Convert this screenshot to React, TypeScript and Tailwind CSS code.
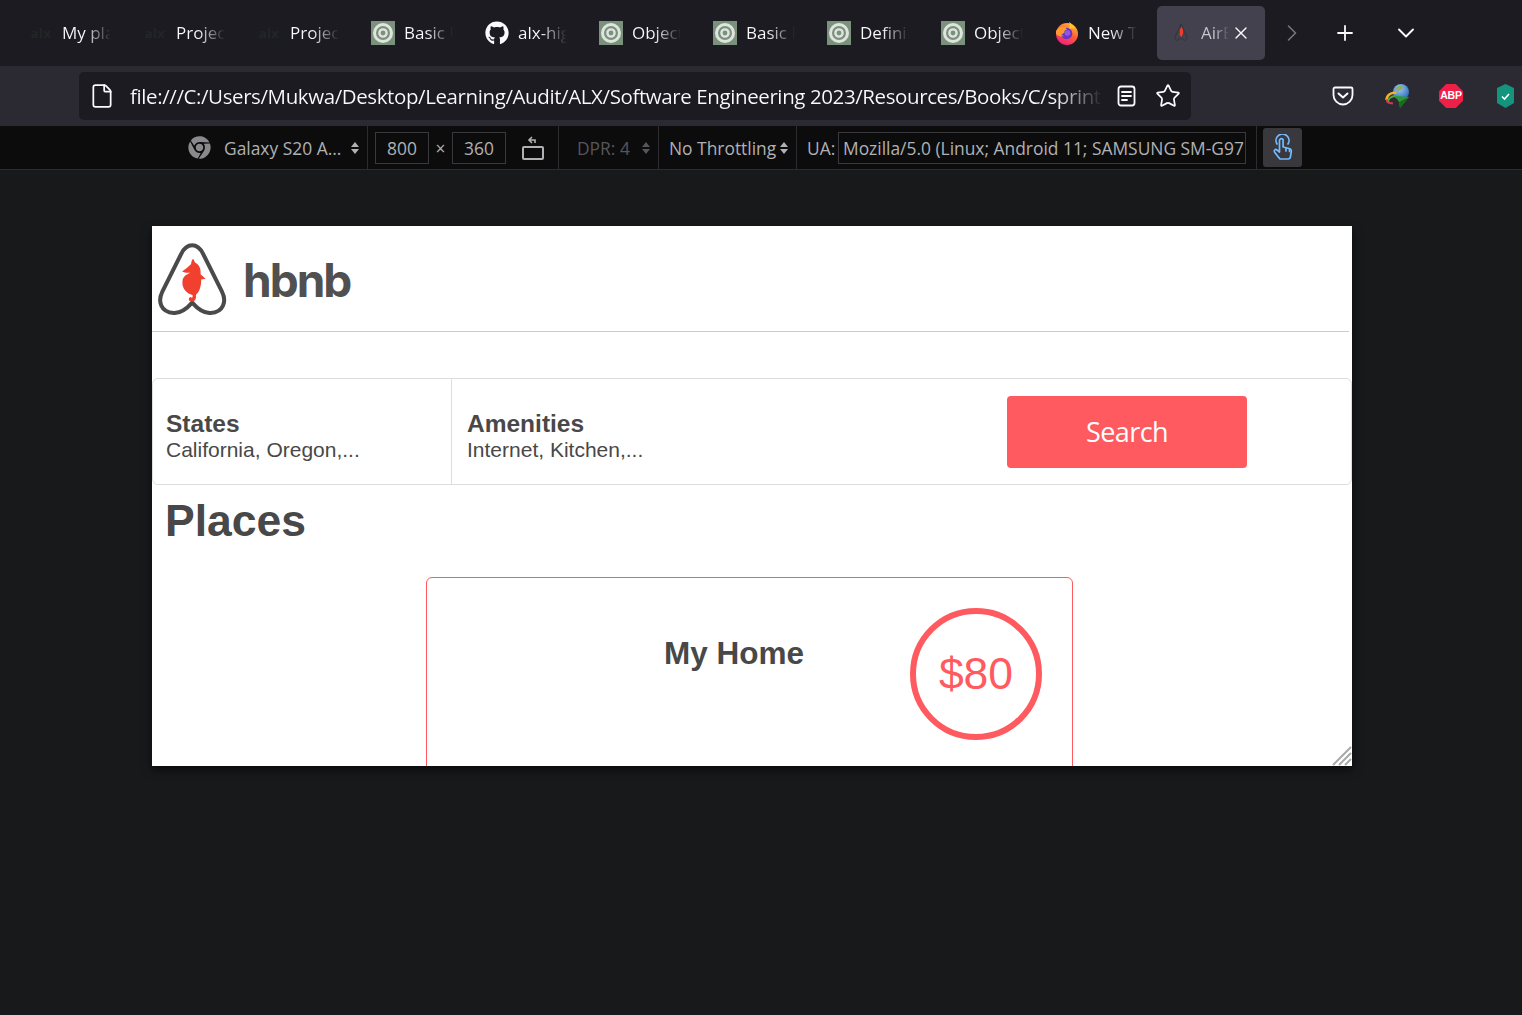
import React from 'react';
import { ChevronDown, ChevronRight, File, Plus, Star, X } from 'lucide-react';
import { FaChrome, FaGithub } from 'react-icons/fa';

type TabInfo = { icon: 'alx' | 'ring' | 'github' | 'firefox'; label: string };

const tabs: TabInfo[] = [
  { icon: 'alx', label: 'My planning' },
  { icon: 'alx', label: 'Project' },
  { icon: 'alx', label: 'Project' },
  { icon: 'ring', label: 'Basic Use' },
  { icon: 'github', label: 'alx-higher' },
  { icon: 'ring', label: 'Objects' },
  { icon: 'ring', label: 'Basic Re' },
  { icon: 'ring', label: 'Defining' },
  { icon: 'ring', label: 'Objects' },
  { icon: 'firefox', label: 'New Tab' },
];

function RingIcon() {
  return (
    <svg width="24" height="24" viewBox="0 0 24 24" className="shrink-0">
      <rect width="24" height="24" fill="#7a917c" />
      <circle cx="12" cy="12" r="8.500" fill="none" stroke="#dfe5de" strokeWidth="3" className="blur-[0.4px]" />
      <circle cx="12" cy="12" r="3.600" fill="none" stroke="#dfe5de" strokeWidth="2.400" className="blur-[0.3px]" />
    </svg>
  );
}

function FirefoxIcon() {
  return (
    <svg width="24" height="24" viewBox="0 0 24 24" className="shrink-0">
      <defs>
        <linearGradient id="fx" x1="0.8" y1="0" x2="0.3" y2="1">
          <stop offset="0" stopColor="#ffc02e" />
          <stop offset="0.5" stopColor="#ff5b37" />
          <stop offset="1" stopColor="#ee1f82" />
        </linearGradient>
      </defs>
      <circle cx="12" cy="13" r="11" fill="url(#fx)" />
      <path d="M14 1c3 2 5 4 6 7-2-1-5-1-7 0 2-2 2-4 1-7z" fill="#ffc42e" />
      <circle cx="11.500" cy="12.500" r="5.800" fill="#6a35c4" />
      <circle cx="12.500" cy="12" r="2.800" fill="#8f5ae0" />
      <path d="M1 10c2-4 6-5 9-4l2 3c-2-.5-3 1-2.500 2.500L6 14l3 1c-3 1-6 0-8-2z" fill="#ff9a2e" />
    </svg>
  );
}

function TabIcon({ icon }: { icon: TabInfo['icon'] }) {
  if (icon === 'ring') return <RingIcon />;
  if (icon === 'firefox') return <FirefoxIcon />;
  if (icon === 'github') return <FaGithub className="w-6 h-6 shrink-0 text-[#fbfbfe]" />;
  return (
    <span className="w-6 h-6 shrink-0 flex items-center justify-center text-[13px] font-bold leading-none tracking-[0.5px] text-[#202726] font-['Noto_Sans',sans-serif]">
      alx
    </span>
  );
}

function Tab({ icon, label }: TabInfo) {
  return (
    <div className="w-[114px] shrink-0 pl-[14px] flex items-center gap-[9px]">
      <TabIcon icon={icon} />
      <span className="w-[49px] overflow-hidden whitespace-nowrap text-[17px] bg-linear-to-r from-[#fbfbfe] from-45% to-transparent bg-clip-text text-transparent">
        {label}
      </span>
    </div>
  );
}

function TabBar() {
  return (
    <div className="h-[66px] bg-[#1c1b22] flex items-center pl-[15px] shrink-0">
      {tabs.map((tab, i) => (
        <Tab key={i} {...tab} />
      ))}
      <div className="ml-[2px] w-[108px] h-[54px] rounded-[5px] bg-[#42414d] flex items-center pl-4 relative">
        <svg width="16" height="20" viewBox="0 0 16 20" className="shrink-0">
          <path d="M8 1 2 14c-1 3 2 5 6 1 4 4 7 2 6-1z" fill="none" stroke="#33333a" strokeWidth="1" />
          <path d="M8.500 4c2 2 2.500 6 0 10-2-1-2.500-3-1.500-5-1-1 0-3 1.500-5z" fill="#ef3a2c" />
        </svg>
        <span className="ml-[12px] w-[28px] overflow-hidden whitespace-nowrap text-[17px] bg-linear-to-r from-[#c8c8cf] from-50% to-transparent bg-clip-text text-transparent">
          AirBnB
        </span>
        <X className="absolute left-[74px] top-[17px] w-5 h-5 text-[#fbfbfe]" strokeWidth={1.600} />
      </div>
      <ChevronRight className="ml-[13px] w-7 h-7 text-[#75757c]" strokeWidth={1.400} />
      <Plus className="ml-[27px] w-6 h-6 text-[#fbfbfe]" strokeWidth={1.800} />
      <ChevronDown className="ml-[35px] w-7 h-7 text-[#fbfbfe]" strokeWidth={1.600} />
    </div>
  );
}

function ReaderIcon() {
  return (
    <svg width="20" height="22" viewBox="0 0 20 22" fill="none" stroke="#fbfbfe" strokeWidth="1.800">
      <rect x="1.500" y="1.500" width="16" height="19" rx="2.500" />
      <path d="M5 7h9M5 11h9M5 15h5" strokeLinecap="round" />
    </svg>
  );
}

function PocketIcon() {
  return (
    <svg width="22" height="20" viewBox="0 0 22 20" fill="none" stroke="#fbfbfe" strokeWidth="1.800">
      <path d="M3 1.500h16a1.500 1.500 0 0 1 1.500 1.500v6a9.500 9.500 0 0 1-19 0V3A1.500 1.500 0 0 1 3 1.500z" />
      <path d="M6.500 7.500 11 11.500l4.500-4" strokeLinecap="round" strokeLinejoin="round" strokeWidth="2" />
    </svg>
  );
}

function IdmIcon() {
  return (
    <svg width="25" height="24" viewBox="0 0 25 24">
      <defs>
        <radialGradient id="globe" cx="0.4" cy="0.3" r="0.8">
          <stop offset="0" stopColor="#9ccbf2" />
          <stop offset="1" stopColor="#1f5fb8" />
        </radialGradient>
      </defs>
      <circle cx="16" cy="8" r="8" fill="url(#globe)" />
      <path d="M10 5c2-3 6-4 9-2l-3 3-3 1z" fill="#8fae62" />
      <path d="M1.500 16c0-5 5-8 10-7" fill="none" stroke="#e8b52a" strokeWidth="2.500" />
      <path d="M3.500 18c-1-3 3-6 7-6" fill="none" stroke="#56a83c" strokeWidth="1.800" />
      <path d="M2 15.500c-.5 2 .5 3.500 3 3.500l3 .5" fill="none" stroke="#d8384a" strokeWidth="2" />
      <path d="M10 12 24 13 15 24 14 18z" fill="#2e9a2c" />
      <path d="M24 13 15 24l-1-6z" fill="#176b1c" />
    </svg>
  );
}

function AddressBar() {
  return (
    <div className="h-[60px] bg-[#2b2a33] flex items-center pl-[79px] shrink-0">
      <div className="w-[1112px] h-12 rounded-[5px] bg-[#1c1b22] flex items-center pl-[10px]">
        <File className="w-[26px] h-[26px] shrink-0 text-[#fbfbfe]" strokeWidth={1.600} />
        <span className="ml-[15px] mt-px w-[973px] overflow-hidden whitespace-nowrap text-[20.500px] tracking-[-0.4px] bg-linear-to-r from-[#fbfbfe] from-95% to-transparent bg-clip-text text-transparent">
          file:///C:/Users/Mukwa/Desktop/Learning/Audit/ALX/Software Engineering 2023/Resources/Books/C/sprint_3
        </span>
        <span className="ml-[14px] flex items-center">
          <ReaderIcon />
        </span>
        <Star className="ml-[18px] w-[26px] h-[26px] text-[#fbfbfe]" strokeWidth={1.600} />
      </div>
      <div className="ml-[141px] flex items-center">
        <PocketIcon />
      </div>
      <div className="ml-[31px] flex items-center">
        <IdmIcon />
      </div>
      <div className="ml-[29px] w-6 h-6 bg-[#ee2048] flex items-center justify-center text-white text-[10.500px] font-bold tracking-[-0.2px] font-['Liberation_Sans',sans-serif] [clip-path:polygon(30%_0,70%_0,100%_30%,100%_70%,70%_100%,30%_100%,0_70%,0_30%)]">
        ABP
      </div>
      <div className="ml-[34px] flex items-center">
        <svg width="17" height="24" viewBox="0 0 17 24">
          <path d="M8.500 0 17 4v15l-8.500 5L0 19V4z" fill="#12957c" />
          <path d="M5 12.500 7.500 15 12 10" fill="none" stroke="#fff" strokeWidth="1.600" />
        </svg>
      </div>
    </div>
  );
}

function Sep() {
  return <div className="w-px h-[44px] bg-[#2d2d31] shrink-0" />;
}

function Arrows({ dim }: { dim?: boolean }) {
  return (
    <svg width="14" height="14" viewBox="0 0 14 14" className="shrink-0" fill={dim ? '#56565a' : '#b1b1b3'}>
      <path d="M7 1 11 6H3zM7 13 3 8h8z" />
    </svg>
  );
}

function SizeBox({ value }: { value: string }) {
  return (
    <div className="w-[54px] h-8 pt-[2px] border border-[#38383d] flex items-center justify-center text-[#b1b1b3]">
      {value}
    </div>
  );
}

function TouchIcon() {
  return (
    <svg width="24" height="28" viewBox="0 0 24 28" fill="none" stroke="#75baff" strokeWidth="1.700" strokeLinejoin="round" strokeLinecap="round">
      <path d="M6 10a6.500 6.500 0 1 1 11 0" />
      <path d="M9 25c-1-1-4-5-5.500-7-1-1.700 1-3.300 2.500-2l2.500 2V6.500a1.800 1.800 0 0 1 3.600 0V13l6 1.500c1.500.4 2.400 1.500 2.200 3l-.8 5c-.2 1.600-1.200 2.500-2.500 2.500z" />
      <path d="M15 14v3M18.500 15v2.500" />
    </svg>
  );
}

function Toolbar() {
  return (
    <div className="h-[44px] bg-[#0c0c0d] border-b border-[#2d2d31] flex items-center pl-[188px] shrink-0 text-[17.400px] text-[#b1b1b3]">
      <FaChrome className="w-[23px] h-[23px] shrink-0 text-[#8a8a8c]" />
      <span className="ml-[13px] pt-[2px] w-[124px] whitespace-nowrap">Galaxy S20 A...</span>
      <Arrows />
      <div className="ml-[5px] flex items-center">
        <Sep />
      </div>
      <div className="ml-[7px]">
        <SizeBox value="800" />
      </div>
      <span className="w-[23px] pt-[2px] text-center">×</span>
      <SizeBox value="360" />
      <svg width="24" height="26" viewBox="0 0 24 26" fill="none" stroke="#b1b1b3" strokeWidth="2" className="ml-[15px] shrink-0">
        <rect x="2" y="12" width="20" height="12" rx="1" />
        <path d="M14 8V5H8M11 2 8 5l3 3" strokeWidth="1.600" />
      </svg>
      <div className="ml-[13px]">
        <Sep />
      </div>
      <span className="ml-[18px] pt-[2px] w-[62px] whitespace-nowrap text-[#56565a]">DPR: 4</span>
      <Arrows dim />
      <div className="ml-[5px]">
        <Sep />
      </div>
      <span className="ml-[10px] pt-[2px] w-[108px] whitespace-nowrap">No Throttling</span>
      <Arrows />
      <div className="ml-[5px]">
        <Sep />
      </div>
      <span className="ml-[10px] pt-[2px] w-[31px]">UA:</span>
      <div className="w-[408px] h-8 border border-[#38383d] pl-1 pt-[2px] overflow-hidden whitespace-nowrap flex items-center">
        Mozilla/5.0 (Linux; Android 11; SAMSUNG SM-G97
      </div>
      <div className="ml-[10px]">
        <Sep />
      </div>
      <div className="ml-[6px] w-[39px] h-[39px] rounded-[3px] bg-[#38383d] flex items-center justify-center">
        <TouchIcon />
      </div>
    </div>
  );
}

function Logo() {
  return (
    <div className="flex items-center h-full pl-[5px]">
      <svg width="72" height="72" viewBox="20 25 215 215" className="shrink-0 mt-px">
        <path
          d="M125 32C112 32 100 42 92 58L36 170C22 198 30 232 70 234C92 235 110 220 125 203C140 220 158 235 180 234C220 232 228 198 214 170L158 58C150 42 138 32 125 32Z"
          fill="none"
          stroke="#4a4a4a"
          strokeWidth="12"
        />
        <path
          d="M128 72 134 84C146 88 152 104 150 118L165 132 152 134C152 152 148 170 136 180C138 190 134 200 124 200C114 200 112 188 120 186C124 190 128 188 126 180C108 176 94 160 96 140C97 124 110 118 120 114C112 114 102 114 95 110C104 104 114 96 122 88C122 82 124 76 128 72Z"
          fill="#f1402e"
        />
      </svg>
      <span className="ml-[14px] mt-[2px] text-[46px] leading-none font-bold tracking-[-2px] text-[#505050] font-['Inter',sans-serif]">
        hbnb
      </span>
    </div>
  );
}

function Filters() {
  return (
    <section className="mt-[46px] w-[1200px] h-[107px] border border-[#dddddd] rounded-[6px] flex items-center">
      <div className="w-[299px] h-full border-r border-[#dddddd] pl-[13px] pt-[30px] shrink-0">
        <h3 className="text-[24.500px] leading-[29px] font-bold">States</h3>
        <p className="text-[21px] leading-[24px]">California, Oregon,...</p>
      </div>
      <div className="flex-1 h-full pl-[15px] pt-[30px]">
        <h3 className="text-[24.500px] leading-[29px] font-bold">Amenities</h3>
        <p className="text-[21px] leading-[24px]">Internet, Kitchen,...</p>
      </div>
      <button
        type="button"
        className="w-60 h-[72px] mr-[104px] pt-[2px] rounded-[4px] bg-[#ff5a5f] text-white text-[27px] tracking-[-0.6px] font-['Open_Sans',sans-serif]"
      >
        Search
      </button>
    </section>
  );
}

function PlaceCard() {
  return (
    <article className="ml-[274px] mt-[30px] w-[647px] h-[220px] border border-[#ff5a5f] rounded-[6px] relative">
      <h2 className="mt-[52px] ml-[237px] text-[31.500px] leading-[46px] font-bold">My Home</h2>
      <div className="absolute left-[483px] top-[30px] w-[132px] h-[132px] rounded-full border-[6px] border-[#ff5a5f] flex items-center justify-center text-[44.500px] text-[#ff5a5f]">
        $80
      </div>
    </article>
  );
}

function ResizeHandle() {
  return (
    <svg width="20" height="20" viewBox="0 0 20 20" className="absolute right-0 bottom-0" stroke="#a8a8a8" strokeWidth="2">
      <path d="M1 19 19 1M7 19 19 7M13 19 19 13" />
    </svg>
  );
}

export default function App() {
  return (
    <div className="w-full h-screen min-h-[1015px] flex flex-col overflow-hidden bg-[#18191b] font-['Open_Sans',sans-serif]">
      <TabBar />
      <AddressBar />
      <Toolbar />
      <div className="pl-[152px] pt-[56px]">
        <div className="relative w-[1200px] h-[540px] bg-white overflow-hidden shadow-[0_4px_8px_rgba(0,0,0,0.6)] text-[#484848] font-['Liberation_Sans',sans-serif]">
          <header className="w-[1197px] h-[106px] border-b border-[#cccccc]">
            <Logo />
          </header>
          <Filters />
          <h1 className="ml-[13px] mt-[10px] text-[44.500px] leading-[52px] font-bold">Places</h1>
          <PlaceCard />
          <ResizeHandle />
        </div>
      </div>
    </div>
  );
}
